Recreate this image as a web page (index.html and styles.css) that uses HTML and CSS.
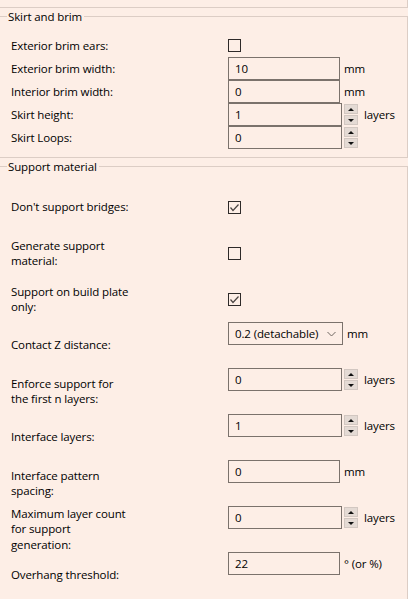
FILE: index.html
```html
<!DOCTYPE html>
<html>
<head>
<meta charset="utf-8">
<link rel="stylesheet" href="styles.css">
</head>
<body>
<div class="prev-group"></div>

<fieldset class="group">
  <legend>Skirt and brim</legend>
  <div class="grid compact">
    <div class="lbl">Exterior brim ears:</div>
    <div class="ctl"><span class="check"></span></div>

    <div class="lbl">Exterior brim width:</div>
    <div class="ctl"><div class="field">10</div><span class="unit">mm</span></div>

    <div class="lbl">Interior brim width:</div>
    <div class="ctl"><div class="field">0</div><span class="unit">mm</span></div>

    <div class="lbl">Skirt height:</div>
    <div class="ctl"><div class="field wide">1</div><div class="spin"><span class="btn up"></span><span class="btn down"></span></div><span class="unit after-spin">layers</span></div>

    <div class="lbl">Skirt Loops:</div>
    <div class="ctl"><div class="field wide">0</div><div class="spin"><span class="btn up"></span><span class="btn down"></span></div></div>
  </div>
</fieldset>

<fieldset class="group">
  <legend>Support material</legend>
  <div class="grid tall">
    <div class="lbl">Don't support bridges:</div>
    <div class="ctl"><span class="check checked"><svg width="11" height="11" viewBox="0 0 11 11"><polyline points="1.5,5.5 4,8.5 9.5,2.5" fill="none" stroke="#4a4442" stroke-width="1.2"/></svg></span></div>

    <div class="lbl">Generate support<br>material:</div>
    <div class="ctl"><span class="check"></span></div>

    <div class="lbl">Support on build plate<br>only:</div>
    <div class="ctl"><span class="check checked"><svg width="11" height="11" viewBox="0 0 11 11"><polyline points="1.5,5.5 4,8.5 9.5,2.5" fill="none" stroke="#4a4442" stroke-width="1.2"/></svg></span></div>

    <div class="lbl">Contact Z distance:</div>
    <div class="ctl top"><div class="field combo"><span class="combo-text">0.2 (detachable)</span><svg class="chev" width="9" height="6" viewBox="0 0 9 6"><polyline points="0.5,1 4.5,5 8.5,1" fill="none" stroke="#6e6661" stroke-width="1"/></svg></div><span class="unit">mm</span></div>

    <div class="lbl">Enforce support for<br>the first n layers:</div>
    <div class="ctl top"><div class="field wide">0</div><div class="spin"><span class="btn up"></span><span class="btn down"></span></div><span class="unit after-spin">layers</span></div>

    <div class="lbl">Interface layers:</div>
    <div class="ctl top"><div class="field wide">1</div><div class="spin"><span class="btn up"></span><span class="btn down"></span></div><span class="unit after-spin">layers</span></div>

    <div class="lbl">Interface pattern<br>spacing:</div>
    <div class="ctl top"><div class="field">0</div><span class="unit">mm</span></div>

    <div class="lbl">Maximum layer count<br>for support<br>generation:</div>
    <div class="ctl top"><div class="field wide">0</div><div class="spin"><span class="btn up"></span><span class="btn down"></span></div><span class="unit after-spin">layers</span></div>

    <div class="lbl">Overhang threshold:</div>
    <div class="ctl top"><div class="field">22</div><span class="unit">° (or %)</span></div>
  </div>
</fieldset>
</body>
</html>
```

FILE: styles.css
```css
* {
  box-sizing: border-box;
}

html,
body {
  margin: 0;
  padding: 0;
  background: #fdeee6;
}

body {
  font-family: "Open Sans", "Noto Sans", sans-serif;
  font-size: 11.5px;
  letter-spacing: -0.12px;
  color: #000;
  overflow: hidden;
  height: 599px;
}

.prev-group {
  height: 8px;
  border-right: 1px solid #dccdc5;
  border-bottom: 1px solid #dccdc5;
}

.group {
  margin: 0 0 0 -1px;
  width: 409px;
  min-width: 0;
  border: 1px solid #dccdc5;
  padding: 9px 0 8px 7px;
}

.group legend {
  padding: 0 2px 0 1px;
  height: 17px;
  line-height: 17px;
}

.grid {
  display: grid;
  grid-template-columns: 217px 1fr;
  margin-left: 4px;
  align-items: center;
}

.grid.compact {
  grid-auto-rows: 23px;
}

.grid.tall {
  grid-auto-rows: 46px;
}

.lbl {
  line-height: 15.5px;
  white-space: nowrap;
}

.ctl {
  display: flex;
  align-items: center;
  height: 23px;
}

.ctl.top {
  align-self: start;
}

.check {
  width: 13px;
  height: 13px;
  border: 1px solid #2e2a29;
  display: flex;
  align-items: center;
  justify-content: center;
}

.field {
  width: 112px;
  height: 23px;
  border: 1px solid #7b726c;
  padding-left: 6px;
  display: flex;
  align-items: center;
  flex: none;
}

.field.wide {
  width: 114px;
}

.field.combo {
  width: 115px;
  justify-content: space-between;
  padding-right: 6px;
}

.chev {
  display: block;
}

.unit {
  margin-left: 4px;
  white-space: nowrap;
}

.unit.after-spin {
  margin-left: 6px;
}

.spin {
  display: flex;
  flex-direction: column;
  gap: 1px;
  margin-left: 2px;
}

.btn {
  width: 14px;
  height: 10px;
  background: #e4dad4;
  border: 1px solid #d2c7c1;
  display: flex;
  align-items: center;
  justify-content: center;
}

.btn::before {
  content: "";
  width: 0;
  height: 0;
  border-left: 3px solid transparent;
  border-right: 3px solid transparent;
}

.btn.up::before {
  border-bottom: 3px solid #111;
}

.btn.down::before {
  border-top: 3px solid #111;
}
```
